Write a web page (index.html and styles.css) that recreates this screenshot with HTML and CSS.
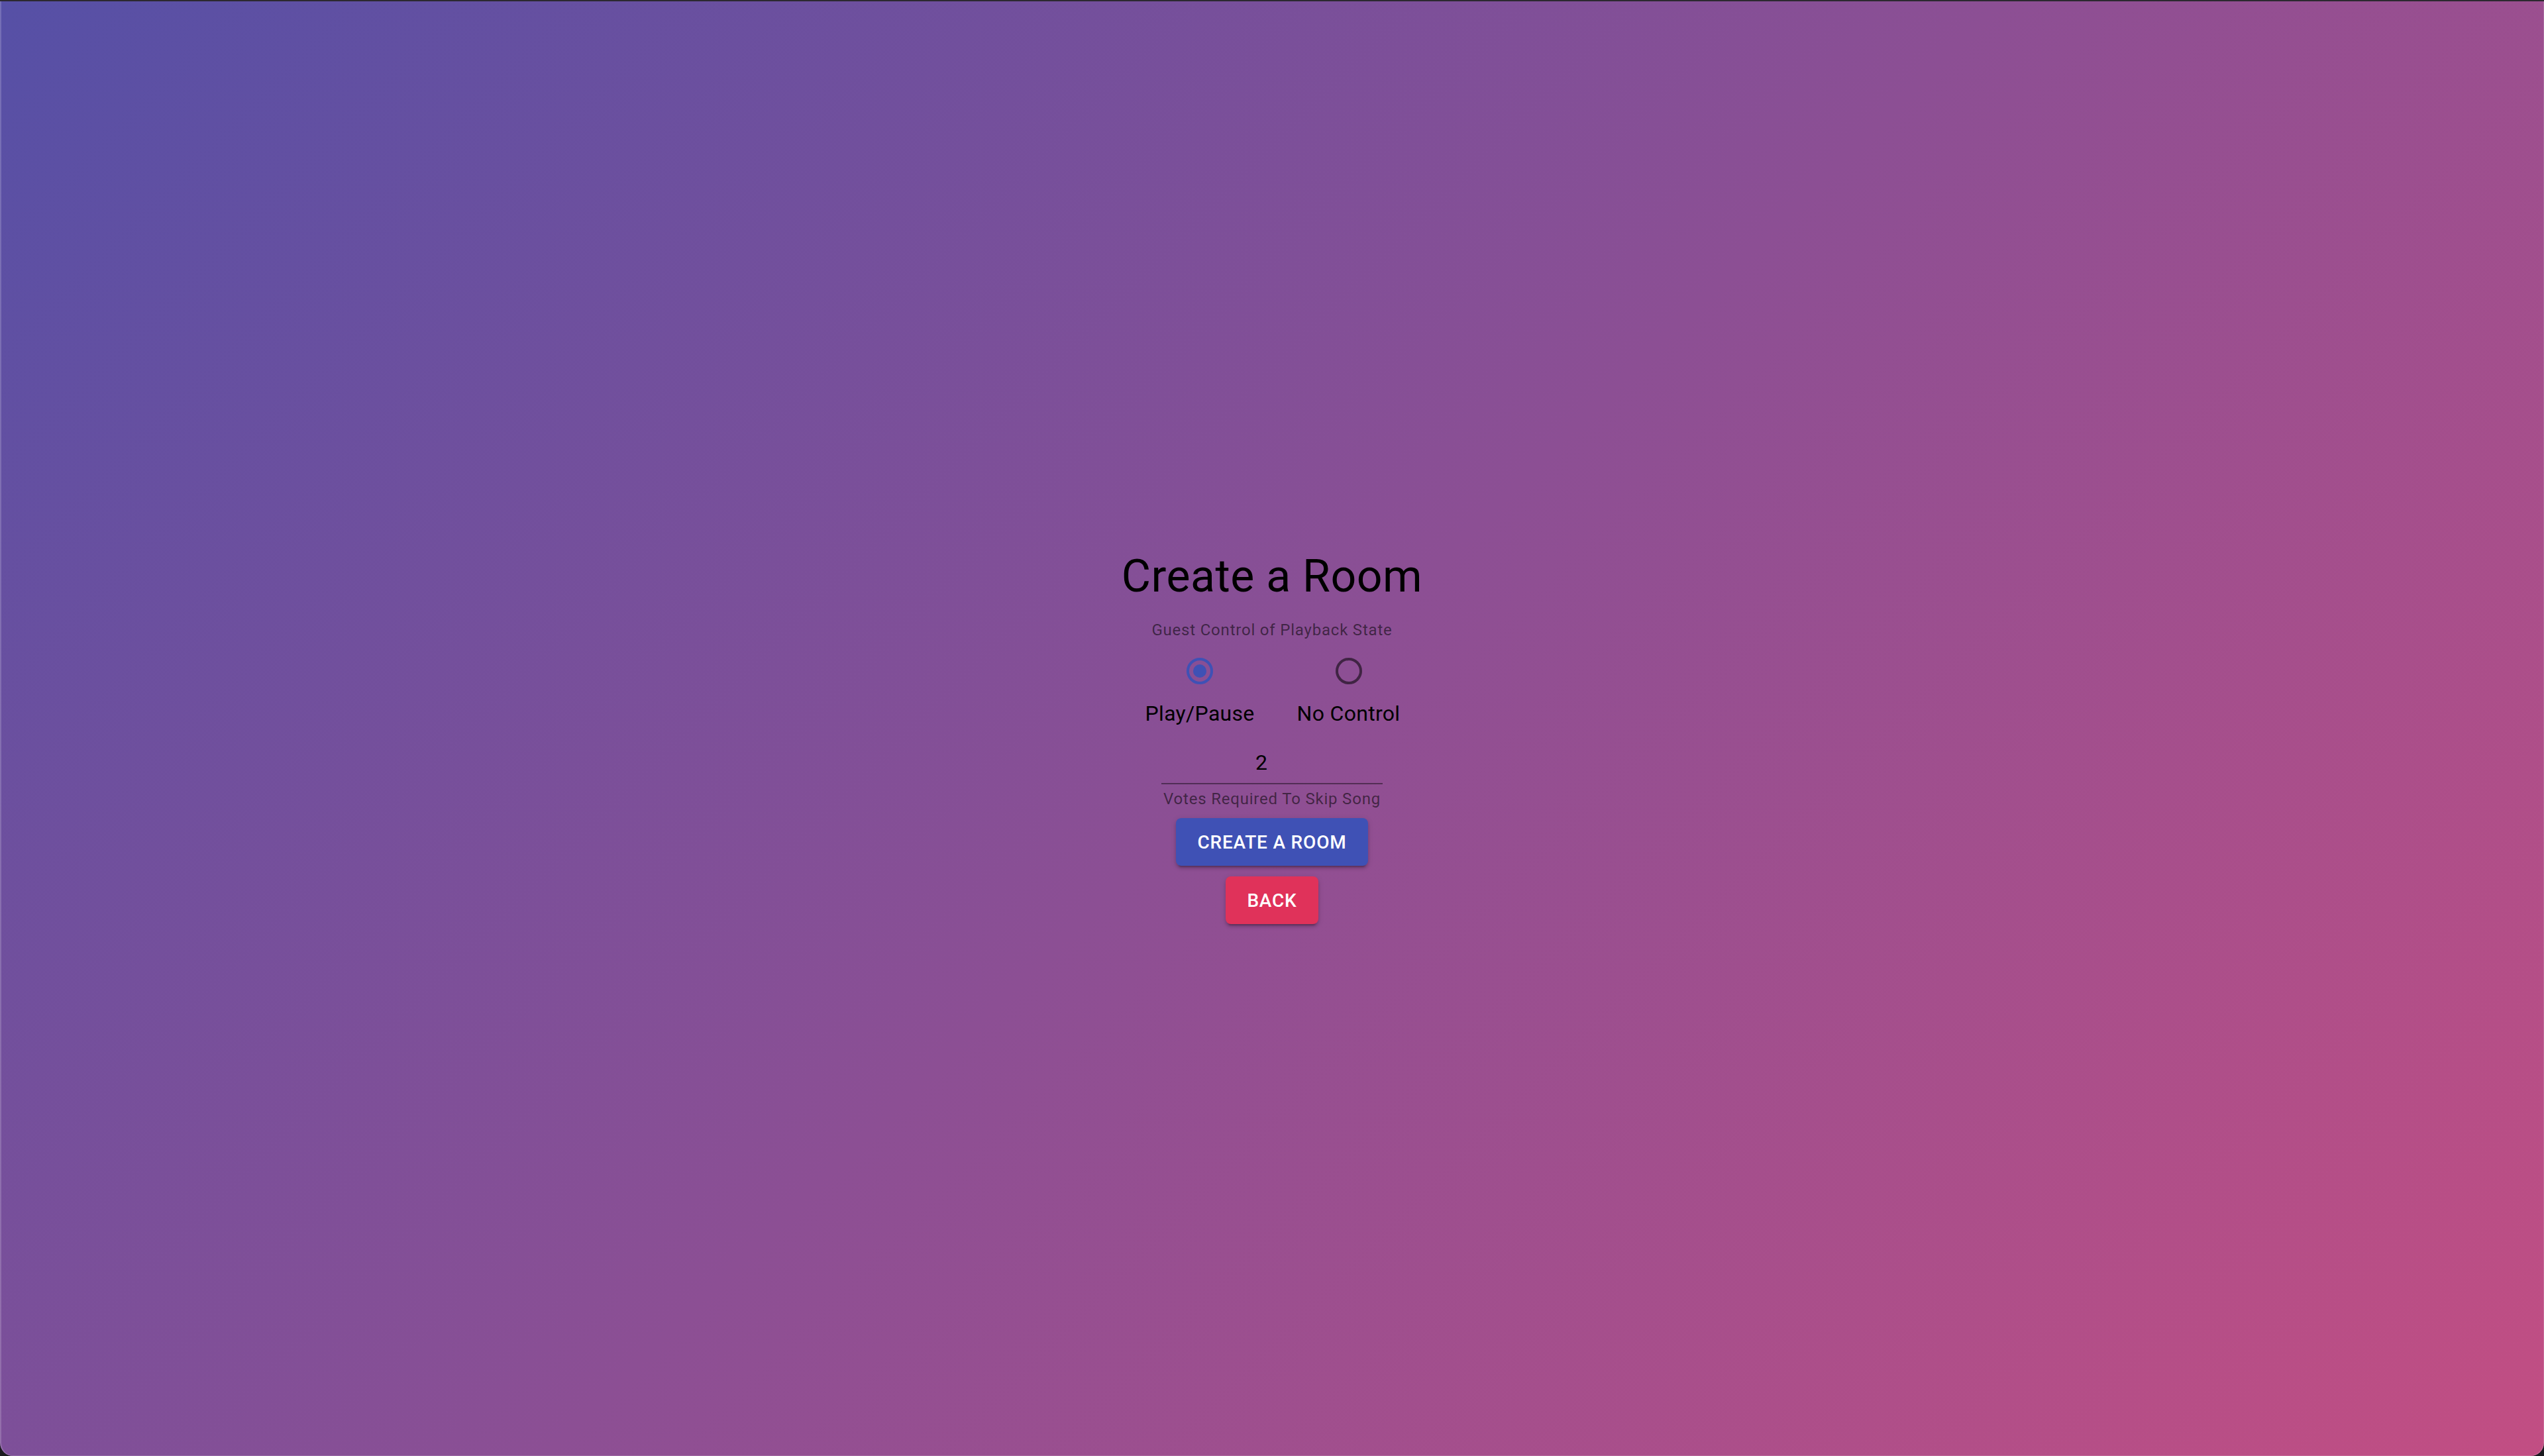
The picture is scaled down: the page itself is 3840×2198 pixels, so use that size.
FILE: index.html
```html
<!DOCTYPE html>
<html lang="en">
<head>
<meta charset="utf-8">
<title>Create a Room</title>
<link rel="stylesheet" href="styles.css">
</head>
<body>
<div class="window">
  <main class="create-room">
    <h4 class="title">Create a Room</h4>
    <div class="form-label">Guest Control of Playback State</div>
    <div class="radio-group" role="radiogroup">
      <label class="radio-item">
        <span class="radio checked">
          <svg viewBox="0 0 24 24" width="48" height="48" aria-hidden="true">
            <circle cx="12" cy="12" r="9" fill="none" stroke="currentColor" stroke-width="2"/>
            <circle cx="12" cy="12" r="5" fill="currentColor"/>
          </svg>
        </span>
        <span class="radio-label">Play/Pause</span>
      </label>
      <label class="radio-item">
        <span class="radio">
          <svg viewBox="0 0 24 24" width="48" height="48" aria-hidden="true">
            <circle cx="12" cy="12" r="9" fill="none" stroke="currentColor" stroke-width="2"/>
          </svg>
        </span>
        <span class="radio-label">No Control</span>
      </label>
    </div>
    <div class="text-field">
      <div class="input-wrap"><span class="input-value">2</span></div>
      <div class="helper">Votes Required To Skip Song</div>
    </div>
    <button class="btn btn-primary" type="button">Create A Room</button>
    <button class="btn btn-secondary" type="button">Back</button>
  </main>
</div>
</body>
</html>
```

FILE: styles.css
```css
html, body {
  margin: 0;
  padding: 0;
  height: 100%;
  background: #1b1a1f;
}

body {
  font-family: Roboto, "Liberation Sans", Arial, sans-serif;
}

.window {
  box-sizing: border-box;
  height: 100vh;
  border-top: 2px solid #2c2930;
  border-radius: 0 0 20px 20px;
  background: linear-gradient(135deg, #5650a6 0%, #8c4f94 50%, #c24e83 100%);
  box-shadow: inset 2px 0 0 rgba(255, 255, 255, 0.18), inset -1px -1px 0 rgba(255, 255, 255, 0.15);
  display: flex;
  flex-direction: column;
  justify-content: center;
  align-items: center;
  padding: 23px 0 0 0;
}

.create-room {
  display: flex;
  flex-direction: column;
  align-items: center;
}

.title {
  margin: 0;
  font-size: 68px;
  line-height: 84px;
  font-weight: 400;
  color: #000000;
  letter-spacing: 0.5px;
}

.form-label {
  margin-top: 19px;
  font-size: 24px;
  line-height: 40px;
  letter-spacing: 0.8px;
  color: rgba(0, 0, 0, 0.54);
  white-space: nowrap;
}

.radio-group {
  display: flex;
  flex-direction: row;
  gap: 64px;
  padding-left: 2px;
}

.radio-item {
  display: flex;
  flex-direction: column;
  align-items: center;
}

.radio {
  display: flex;
  padding: 18px;
  color: rgba(0, 0, 0, 0.54);
}

.radio.checked {
  color: #3f51b5;
}

.radio svg {
  display: block;
}

.radio-label {
  margin-top: -2px;
  font-size: 32px;
  line-height: 48px;
  letter-spacing: 0.3px;
  color: #000000;
  white-space: nowrap;
}

.text-field {
  margin-top: 19px;
  width: 334px;
  display: flex;
  flex-direction: column;
  align-items: center;
}

.input-wrap {
  box-sizing: border-box;
  width: 100%;
  height: 64px;
  padding: 12px 32px 14px 0;
  border-bottom: 2px solid rgba(0, 0, 0, 0.42);
  text-align: center;
  font-size: 32px;
  line-height: 38px;
  color: #000000;
}

.helper {
  margin-top: 2px;
  font-size: 24px;
  line-height: 40px;
  letter-spacing: 0.8px;
  color: rgba(0, 0, 0, 0.54);
  text-align: center;
  white-space: nowrap;
}

.btn {
  box-sizing: border-box;
  height: 72px;
  min-width: 128px;
  padding: 0 32px;
  border: 0;
  border-radius: 8px;
  font-family: Roboto, "Liberation Sans", Arial, sans-serif;
  font-size: 28px;
  font-weight: 500;
  line-height: 49px;
  letter-spacing: 0.8px;
  text-transform: uppercase;
  color: #ffffff;
  box-shadow: 0 6px 2px -4px rgba(0, 0, 0, 0.2), 0 4px 4px 0 rgba(0, 0, 0, 0.14), 0 2px 10px 0 rgba(0, 0, 0, 0.12);
  cursor: pointer;
}

.btn-primary {
  margin-top: 9px;
  background: #3f51b5;
}

.btn-secondary {
  margin-top: 16px;
  background: #e0325a;
}
```
